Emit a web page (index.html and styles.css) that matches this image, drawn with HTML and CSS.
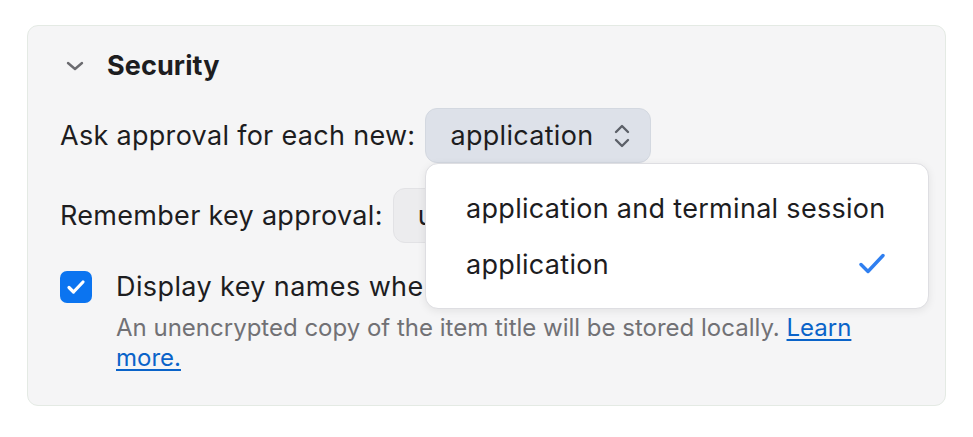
FILE: index.html
```html
<!DOCTYPE html>
<html>
<head>
<meta charset="utf-8">
<link rel="stylesheet" href="styles.css">
</head>
<body>
<div class="card">
  <div class="header">
    <svg class="chev" width="20" height="12" viewBox="0 0 20 12"><path d="M3 3 L10 9 L17 3" fill="none" stroke="#6b6b70" stroke-width="2.4" stroke-linecap="round" stroke-linejoin="round"/></svg>
    <h2 class="title">Security</h2>
  </div>
  <div class="row row-first">
    <span class="label">Ask approval for each new:</span>
    <div class="select select-active">
      <span>application</span>
      <svg class="updown" width="18" height="26" viewBox="0 0 18 26"><path d="M3 9 L9 3 L15 9 M3 17 L9 23 L15 17" fill="none" stroke="#5c6068" stroke-width="2.4" stroke-linecap="round" stroke-linejoin="round"/></svg>
    </div>
  </div>
  <div class="row row-second">
    <span class="label">Remember key approval:</span>
    <div class="select select-plain"><span>until locked</span></div>
  </div>
  <div class="check-row">
    <div class="checkbox">
      <svg width="20" height="16" viewBox="0 0 20 16"><path d="M3 8.5 L7.5 13 L17 3" fill="none" stroke="#fff" stroke-width="3.2" stroke-linecap="round" stroke-linejoin="round"/></svg>
    </div>
    <div class="check-text">
      <div class="check-label">Display key names when authorizing connections</div>
      <div class="desc">An unencrypted copy of the item title will be stored locally. <a href="#" class="link">Learn more.</a></div>
    </div>
  </div>
  <div class="dropdown">
    <div class="item">application and terminal session</div>
    <div class="item"><span>application</span>
      <svg width="28" height="24" viewBox="0 0 28 24"><path d="M3 12.5 L10 19.5 L25 3.5" fill="none" stroke="#2f7ff0" stroke-width="3.4" stroke-linecap="round" stroke-linejoin="round"/></svg>
    </div>
  </div>
</div>
</body>
</html>
```
FILE: styles.css
```css
html, body {
  margin: 0;
  background: #ffffff;
}
body {
  padding: 25px 27px;
  font-family: Inter, "Noto Sans", sans-serif;
  color: #1d1d1f;
}
.card {
  position: relative;
  width: 919px;
  height: 381px;
  box-sizing: border-box;
  background: #f5f5f6;
  border: 1px solid #e4eae4;
  border-radius: 11px;
  padding: 24px 32px 0 32px;
}
.header {
  display: flex;
  align-items: center;
  height: 32px;
}
.chev {
  margin-left: 5px;
  margin-right: 22px;
}
.title {
  margin: 0;
  font-size: 27px;
  font-weight: 700;
  line-height: 32px;
  letter-spacing: 0.1px;
}
.row {
  display: flex;
  align-items: center;
  font-size: 27px;
  letter-spacing: 0.3px;
  height: 55px;
}
.row-first {
  margin-top: 26px;
}
.row-second {
  margin-top: 25px;
}
.label {
  margin-right: 10px;
}
.select {
  height: 55px;
  box-sizing: border-box;
  border-radius: 12px;
  display: flex;
  align-items: center;
  padding: 0 19px 0 24px;
}
.select-active {
  background: #dde1e9;
  border: 1px solid #d3d8e0;
  width: 226px;
  justify-content: space-between;
}
.select-plain {
  background: #ececee;
  border: 1px solid #e2e2e5;
  width: 240px;
}
.check-row {
  display: flex;
  margin-top: 28px;
}
.checkbox {
  width: 32px;
  height: 32px;
  border-radius: 7px;
  background: #0b74f0;
  display: flex;
  align-items: center;
  justify-content: center;
  margin-right: 24px;
  flex-shrink: 0;
}
.check-label {
  font-size: 27px;
  letter-spacing: 0.4px;
  line-height: 32px;
  white-space: nowrap;
}
.desc {
  margin-top: 10px;
  font-size: 24px;
  letter-spacing: 0;
  line-height: 30px;
  color: #717175;
  width: 745px;
}
.link {
  color: #0a63c9;
  text-decoration: underline;
  text-underline-offset: 3px;
}
.dropdown {
  position: absolute;
  left: 397px;
  top: 137px;
  width: 504px;
  box-sizing: border-box;
  background: #ffffff;
  border: 1px solid #dedee2;
  border-radius: 13px;
  box-shadow: 0 2px 8px rgba(0, 0, 0, 0.08);
  padding: 16px 42px 16px 40px;
}
.item {
  height: 56px;
  display: flex;
  align-items: center;
  justify-content: space-between;
  font-size: 27px;
  letter-spacing: 0.3px;
}
```
